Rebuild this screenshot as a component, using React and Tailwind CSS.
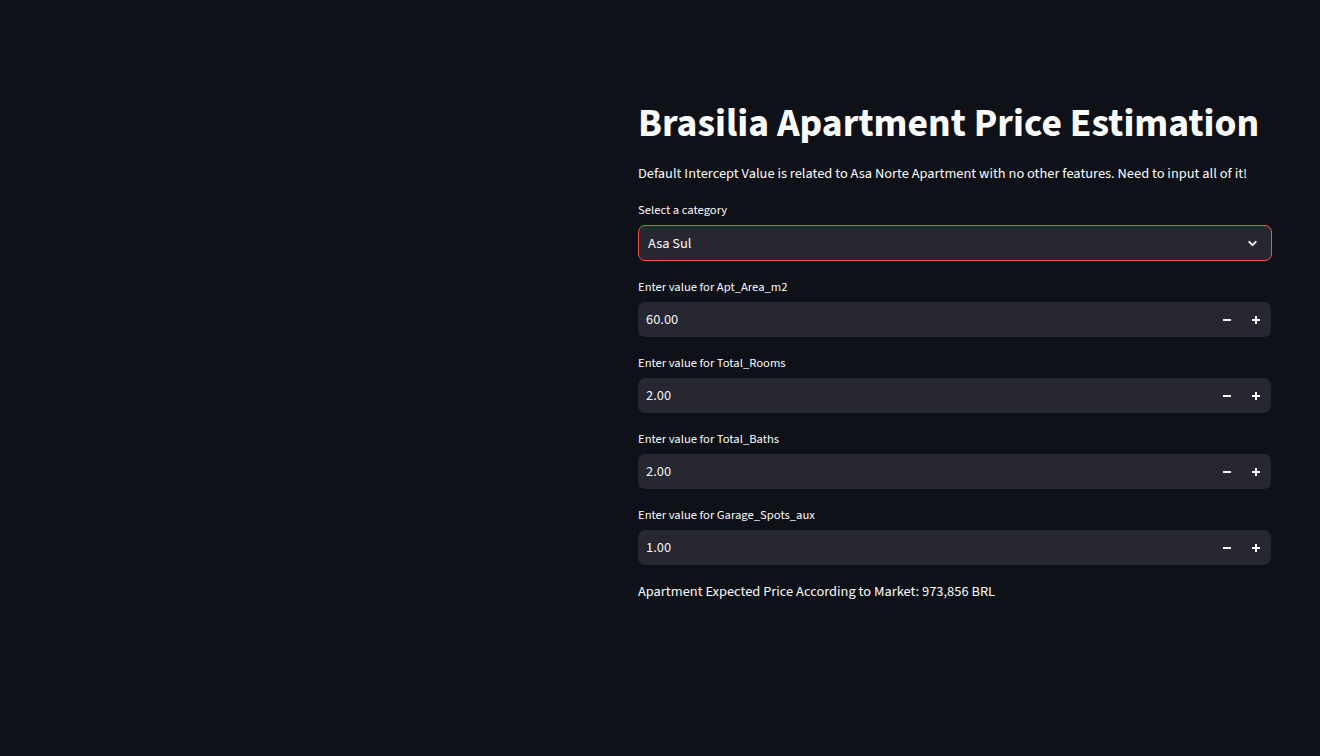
import React from "react";

const font = { fontFamily: '"Source Sans 3", "Lato", sans-serif' };

function NumberField({ label, value }) {
  return (
    <div className="flex flex-col">
      <div className="h-[20px] leading-[20px] text-[12.6px] text-[#fafafa] mt-[16px]">{label}</div>
      <div className="mt-[5px] h-[35px] w-[633px] rounded-[7px] bg-[#262730] flex items-center">
        <div className="flex-1 pl-[8px] pt-[1px] text-[14.4px] text-[#fafafa]">{value}</div>
        <div className="w-[29px] h-full flex items-center justify-center">
          <svg width="10" height="10" viewBox="0 0 10 10"><path d="M1 5h8" stroke="#fafafa" strokeWidth="2" /></svg>
        </div>
        <div className="w-[29px] h-full flex items-center justify-center mr-[1px]">
          <svg width="10" height="10" viewBox="0 0 10 10"><path d="M1 5h8M5 1v8" stroke="#fafafa" strokeWidth="2" /></svg>
        </div>
      </div>
    </div>
  );
}

export default function App() {
  return (
    <div className="min-h-screen w-full bg-[#0e1117] flex" style={font}>
      <div className="w-[638px] shrink-0" />
      <div className="w-[633px] flex flex-col pt-[98px]">
        <h1 className="h-[52px] leading-[52px] text-[39.6px] font-bold text-[#fafafa] whitespace-nowrap">
          Brasilia Apartment Price Estimation
        </h1>
        <p className="mt-[12px] h-[24px] leading-[24px] text-[14.4px] text-[#fafafa] whitespace-nowrap">
          Default Intercept Value is related to Asa Norte Apartment with no other features. Need to input all of it!
        </p>
        <div className="mt-[14px] h-[20px] leading-[20px] text-[12.6px] text-[#fafafa]">Select a category</div>
        <div className="mt-[5px] h-[36px] w-[634px] rounded-[7px] border border-[#ff4b4b] bg-[#262730] flex items-center justify-between pl-[9px] pr-[12px]">
          <span className="pt-[1px] text-[14.4px] text-[#fafafa]">Asa Sul</span>
          <svg width="13" height="13" viewBox="0 0 24 24" fill="none" stroke="#fafafa" strokeWidth="3.5" strokeLinecap="round" strokeLinejoin="round">
            <path d="M6 9l6 6 6-6" />
          </svg>
        </div>
        <NumberField label="Enter value for Apt_Area_m2" value="60.00" />
        <NumberField label="Enter value for Total_Rooms" value="2.00" />
        <NumberField label="Enter value for Total_Baths" value="2.00" />
        <NumberField label="Enter value for Garage_Spots_aux" value="1.00" />
        <p className="mt-[15px] h-[24px] leading-[24px] text-[14.4px] text-[#fafafa] whitespace-nowrap">
          Apartment Expected Price According to Market: 973,856 BRL
        </p>
      </div>
    </div>
  );
}
